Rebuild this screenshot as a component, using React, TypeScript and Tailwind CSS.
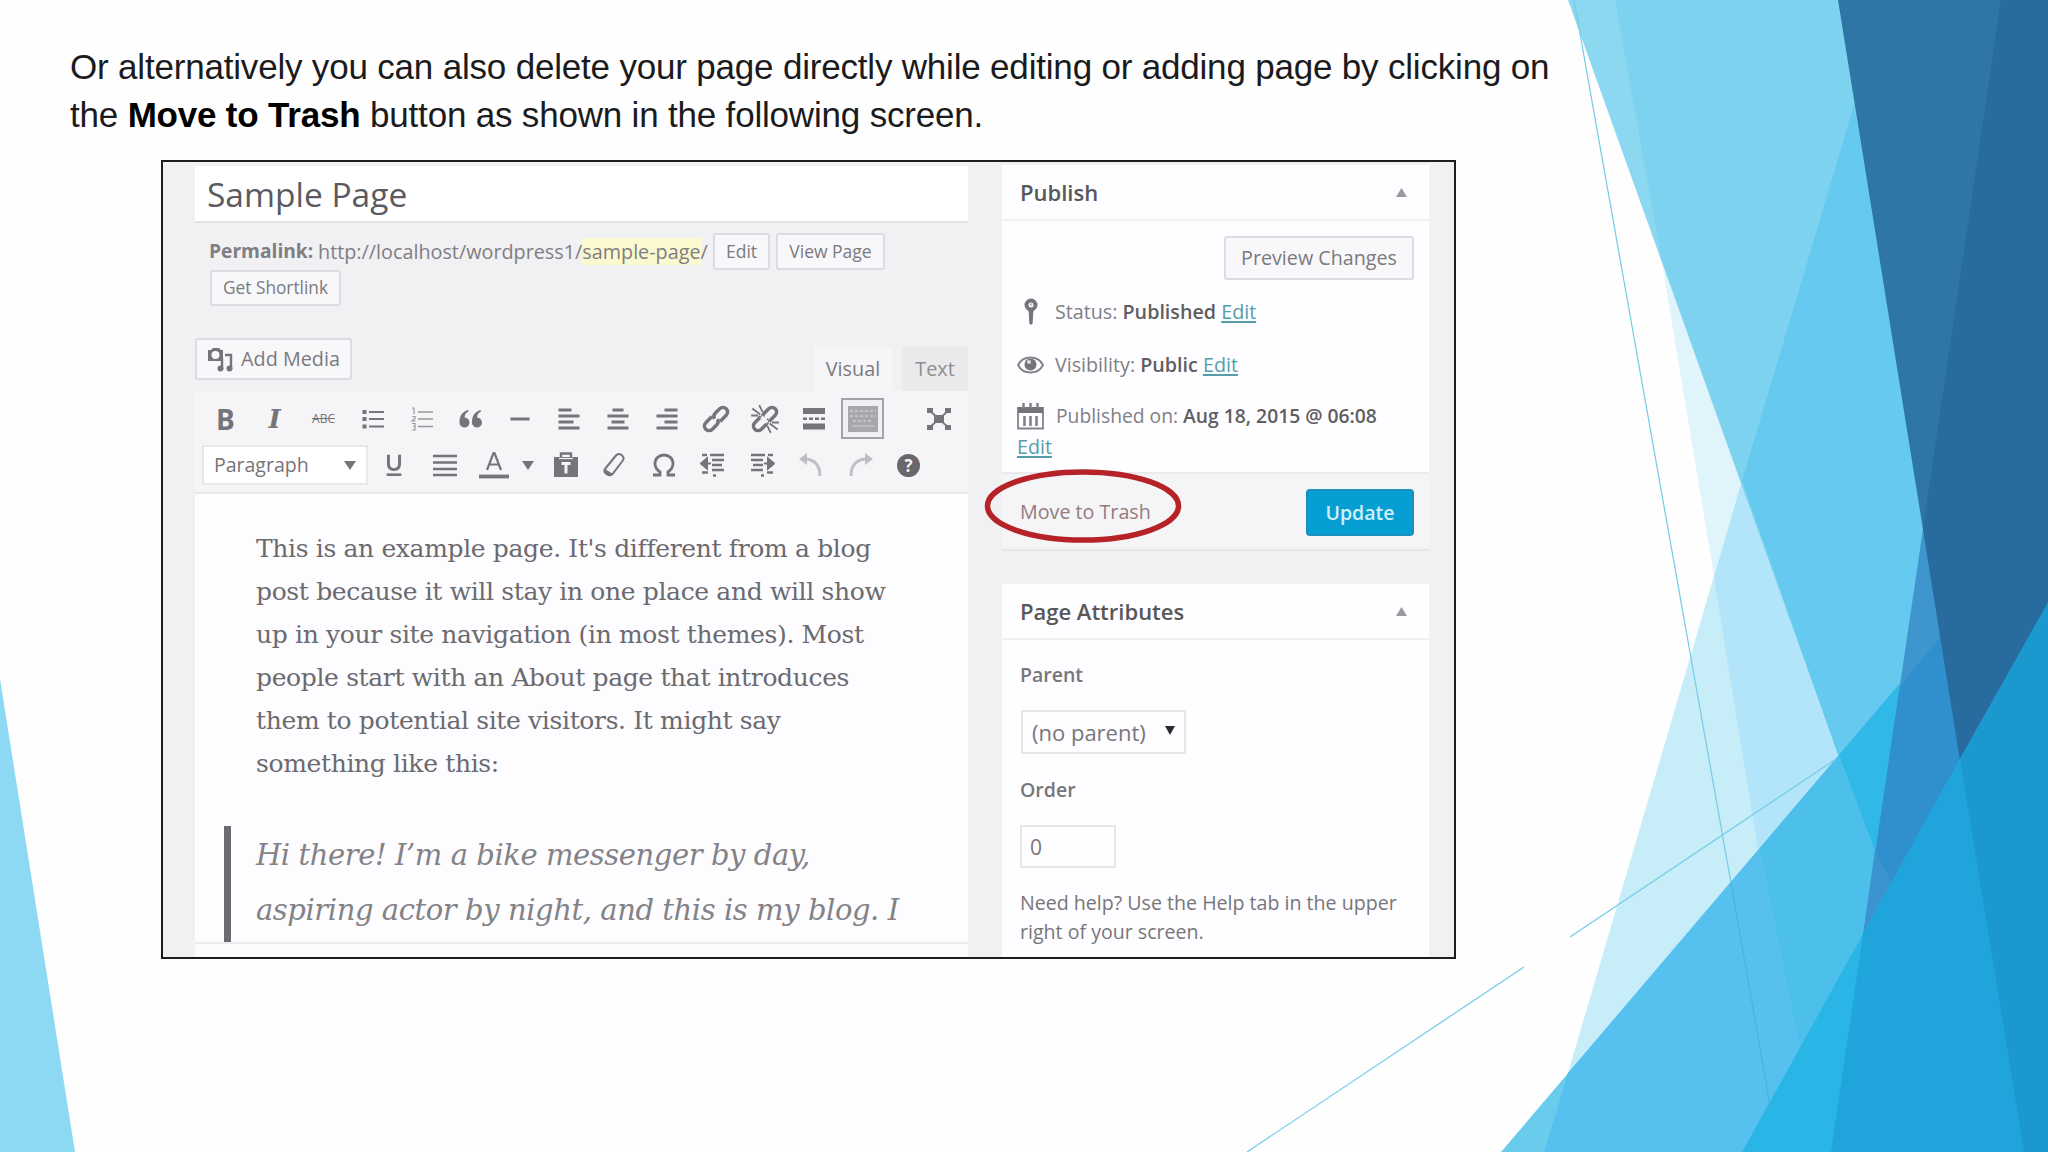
import type { ReactNode } from 'react'

const facets = [
  // light tail on the left edge
  { points: '0,679 75,1152 0,1152', fill: '#8dd9f3' },
  // pale layers
  { points: '1661,257 1839,755 1742,868 1714,576', fill: '#e0f4fc' },
  { points: '1742,481 1839,755 1900,760 1568,1073 1714,576', fill: '#c7edf9' },
  { points: '1742,481 1840,756 1758,850 1714,578', fill: '#b2e5f9' },
  // bright blue band
  { points: '1568,0 1840,0 1925,540 1900,687 1839,757', fill: '#8dd8f1' },
  { points: '1615,0 1840,0 1925,540 1900,687 1839,757 1661,257', fill: '#7dd2f0' },
  { points: '1854,105 1935,580 1935,645 1839,757 1742,481', fill: '#66c9ef' },
  // diagonal wedge from the bottom
  { points: '1501,1152 1839,755 1942,634 2048,600 2048,1152', fill: '#69ccec' },
  { points: '1568,1073 1839,755 1942,634 2048,600 2048,1152 1544,1152', fill: '#56c1ef' },
  { points: '1760,848 1839,755 1942,634 2048,600 2048,1152 1821,1152', fill: '#4cc0ea' },
  { points: '1839,755 1942,634 2048,700 1875,851', fill: '#30b8e7' },
  // dark blue panels
  { points: '1923,529 1962,762 1863,936', fill: '#3f96cf' },
  { points: '1900,686 1940,637 1970,700 1960,761 1863,936', fill: '#2f90cd' },
  { points: '1875,850 1892,884 1863,936', fill: '#3b94cf' },
  { points: '1838,0 2048,0 2048,610 1960,760', fill: '#2e76a6' },
  { points: '2001,0 2048,0 2048,610 1960,760 1923,529', fill: '#276b9f' },
  // bottom right corner
  { points: '1742,1152 1863,934 1960,759 2048,603 2048,1152', fill: '#2ab5e7' },
  { points: '1863,934 1960,759 2048,603 2048,1152 1831,1152', fill: '#20a4dc' },
  { points: '1960,759 2048,603 2048,1152 2024,1152', fill: '#1b98ce' },
]

function Backdrop() {
  return (
    <svg className="absolute inset-0" width="2048" height="1152" viewBox="0 0 2048 1152">
      {facets.map((f) => (
        <polygon key={f.points} points={f.points} fill={f.fill} />
      ))}
      <g stroke="#74cbe6" strokeWidth="1.2">
        <path d="M1574 0 1731 883" />
        <path d="M1731 883 1770 1105" stroke="#3fb6e4" />
        <path d="M1247 1152 1524 967M1570 937 1836 759" />
      </g>
    </svg>
  )
}

function Icon({ children, size = 26 }: { children: ReactNode; size?: number }) {
  return (
    <svg width={size} height={size} viewBox="0 0 26 26" fill="none" stroke="#757478" strokeWidth="2.4">
      {children}
    </svg>
  )
}

const link = (
  <g transform="rotate(-45 13 13)" strokeWidth="3">
    <path d="M12 9H4.500a4 4 0 0 0 0 8H10a4 4 0 0 0 3.800-3" />
    <path d="M14 17h7.500a4 4 0 0 0 0-8H16a4 4 0 0 0-3.800 3" />
  </g>
)

const rowOne: ReactNode[] = [
  <span className="text-[28px] font-bold">B</span>,
  <span className="font-['DejaVu_Serif'] text-[26px] font-bold italic">I</span>,
  <span className="text-[12px] line-through">ABC</span>,
  <Icon>
    <path d="M9 6h15M9 13h15M9 20.500h15" strokeWidth="1.800" />
    <path d="M2.500 6h4M2.500 13h4M2.500 20.500h4" strokeWidth="4" />
  </Icon>,
  <Icon>
    <path d="M9 6h15M9 13h15M9 20.500h15" strokeWidth="1.600" stroke="#9b9a9e" />
    <path d="M3 2h2v6M3 10.500h3v2l-3 2.500h3.500M3 17.500h3v3H4h2v3.500H3" strokeWidth="1.200" stroke="#9b9a9e" />
  </Icon>,
  <Icon>
    <g fill="#757478" stroke="none">
      <path d="M10 4C4 6 1.500 10 1.500 16a5 5 0 1 0 5-4.500C6.800 8.500 8 6.500 10.500 5.500z" />
      <path d="M22.500 4C16.500 6 14 10 14 16a5 5 0 1 0 5-4.500C19.300 8.500 20.500 6.500 23 5.500z" />
    </g>
  </Icon>,
  <Icon><path d="M3.500 13h19" strokeWidth="3" /></Icon>,
  <Icon><path d="M2.500 4h13M2.500 10h21M2.500 16h15M2.500 22h21" strokeWidth="3" /></Icon>,
  <Icon><path d="M7.500 4h11M2.500 10h21M6.500 16h13M2.500 22h21" strokeWidth="3" /></Icon>,
  <Icon><path d="M10.500 4h13M2.500 10h21M10.500 16h13M2.500 22h21" strokeWidth="3" /></Icon>,
  <Icon size={30}>{link}</Icon>,
  <Icon size={30}>
    {link}
    <path d="M2 4l7 5M8 1l3 6M1 10h6M24 22l-7-5M18 25l-3-6M25 16h-6" strokeWidth="1.600" />
    <path d="M10 11l5 5" stroke="#f4f3f6" strokeWidth="3" />
  </Icon>,
  <Icon>
    <path d="M2 5h22M2 20.500h22" strokeWidth="6" />
    <path d="M2 12.800h22" strokeDasharray="4 2" />
  </Icon>,
  <span className="flex h-[41px] w-[43px] shrink-0 items-center justify-center border-2 border-[#a3a2a6] bg-[#f0eff2]">
    <svg width="30" height="26" viewBox="0 0 30 26" fill="none">
      <path d="M0 0h30v26H0z" fill="#a8a7ab" />
      <path d="M2 5h26M2 10h26M5 15h19" stroke="#cfced2" strokeWidth="1.500" strokeDasharray="3 2" />
      <path d="M4 20h22" stroke="#bdbcc0" strokeWidth="2" />
    </svg>
  </span>,
]

const rowTwo: ReactNode[] = [
  <Icon><path d="M1 4h24M1 10.500h24M1 17h24M1 23h24" strokeWidth="2.600" /></Icon>,
  <svg width="32" height="30" viewBox="0 0 32 30" fill="none" stroke="#757478">
    <path d="M9 20 15.500 3h1L23 20M11.500 14.500h9" strokeWidth="2.200" />
    <path d="M1 26.500h30" strokeWidth="3.800" />
  </svg>,
]

const rowTwoRest: ReactNode[] = [
  <Icon>
    <path d="M1 5h24v20H1z" fill="#757478" stroke="none" />
    <path d="M8 5V1.500h10V5" />
    <path d="M6 6.500h14" stroke="#f4f3f6" strokeWidth="1.200" />
    <path d="M8.500 11.500h9M13 11v10.500" stroke="#f4f3f6" strokeWidth="3" />
  </Icon>,
  <Icon>
    <path d="M3 17 13.500 4c2-2.500 4-2.500 6-1s3 3.500 1 6L10.500 22c-2 2-4 1.500-6 0s-3-3-1.500-5z" strokeWidth="2" />
    <path d="M3 17l8 5-3 2-6-3z" fill="#757478" stroke="none" />
  </Icon>,
  <Icon><path d="M2 23h7v-3C5.500 17.500 4 15 4 11.500 4 6.500 8 3 13 3s9 3.500 9 8.500c0 3.500-1.500 6-5 8.500v3h7" strokeWidth="2.800" /></Icon>,
  <Icon>
    <path d="M2 3h5M10 3h14M12 8h12M12 13h10M12 18h12M2 20.500h6M13 23.500h3" />
    <path d="M1 11.500 7 6.500v10zM6 11.500h5" fill="#757478" strokeWidth="2" />
  </Icon>,
  <Icon>
    <path d="M2 3h14M19 3h5M2 8h12M4 13h10M2 18h12M18 20.500h6M12 23.500h3" />
    <path d="M25 11.500 19 6.500v10zM20 11.500h-5" fill="#757478" strokeWidth="2" />
  </Icon>,
  <Icon>
    <g stroke="#c0bfc3">
      <path d="M4 7c11-1 18 5 18 17" strokeWidth="3" />
      <path d="M1 7 9 1v12z" fill="#c0bfc3" stroke="none" />
    </g>
  </Icon>,
  <Icon>
    <g stroke="#c0bfc3">
      <path d="M22 7C11 6 4 12 4 24" strokeWidth="3" />
      <path d="M26 7 18 1v12z" fill="#c0bfc3" stroke="none" />
    </g>
  </Icon>,
  <span className="flex size-[23px] items-center justify-center rounded-full bg-[#68676b] text-[17px] leading-none font-bold text-[#f4f3f6]">?</span>,
]

function Button({ children, className }: { children: ReactNode; className: string }) {
  return (
    <span
      className={`flex shrink-0 items-center justify-center rounded-[3px] border-2 border-[#dddce0] bg-[#f8f7fa] whitespace-nowrap text-[#7b7a7e] ${className}`}
    >
      {children}
    </span>
  )
}

function Editor() {
  return (
    <div className="flex w-[773px] shrink-0 flex-col">
      <div className="mt-[3px] flex h-[57px] items-center border-b-2 border-[#e2e1e4] bg-white pt-px pl-3 text-[33.500px] text-[#5b5a5f]">
        Sample Page
      </div>

      <div className="mt-[10px] flex h-[37px] items-center pl-3.5 text-[19.800px] whitespace-nowrap text-[#7f7e82]">
        <b className="mr-[5px] w-[104px] text-[19.200px] font-bold">Permalink:</b>
        <span className="w-[395px]">
          http://localhost/wordpress1/<span className="bg-[#fbf9cf]">sample-page</span>/
        </span>
        <Button className="h-[37px] w-[57px] text-[17.500px]">Edit</Button>
        <Button className="ml-1.5 h-[37px] w-[109px] text-[17.500px]">View Page</Button>
      </div>
      <Button className="ml-[15px] h-[36px] w-[131px] text-[17.300px]">Get Shortlink</Button>

      <div className="mt-[32px] flex h-[53px] items-start justify-between">
        <Button className="h-[42px] w-[157px] gap-2 text-[19.800px]">
          <svg width="26" height="26" viewBox="0 0 26 26" fill="none" stroke="#757478">
            <path d="M1 4h3l2-2h6l2 2h2v11H1z" fill="#757478" stroke="none" />
            <circle cx="8.500" cy="9" r="4" fill="#f8f7fa" stroke="none" />
            <path d="M18 9h6v14M15 12v11" strokeWidth="2.400" />
            <circle cx="13.500" cy="22.500" r="3" fill="#757478" stroke="none" />
            <circle cx="22.500" cy="22.500" r="3" fill="#757478" stroke="none" />
          </svg>
          Add Media
        </Button>
        <div className="flex gap-2.5 pt-[9px] text-[19.800px] text-[#7b7a7e]">
          <span className="flex h-[44px] w-[78px] items-center justify-center bg-[#f6f5f8]">Visual</span>
          <span className="flex h-[44px] w-[66px] items-center justify-center bg-[#eae9ec] text-[#8f8e92]">Text</span>
        </div>
      </div>

      <div className="flex h-[103px] flex-col border-b-2 border-[#e9e8eb] bg-[#f5f4f7] pt-[6px] text-[#757478]">
        <div className="flex h-[43px] items-center pl-[6px]">
          {rowOne.map((icon, i) => (
            <span key={i} className="flex w-[49px] items-center justify-center leading-none">{icon}</span>
          ))}
          <span className="ml-[27px] flex w-[49px] justify-center">
            <Icon>
              <path d="M3 4l20 18M23 4 3 22" strokeWidth="1.800" />
              <path d="M8 9h10v8H8z" fill="#757478" stroke="none" />
              <path d="M1 2h6v5H1zM19 2h6v5h-6zM1 19h6v5H1zM19 19h6v5h-6z" fill="#757478" stroke="none" />
            </Icon>
          </span>
        </div>
        <div className="mt-[5px] flex h-[40px] items-center pl-[7px]">
          <span className="flex h-[40px] w-[166px] items-center justify-between border-2 border-[#e8e7ea] bg-white px-2.5 text-[19.500px]">
            Paragraph
            <svg width="12" height="9"><path d="M0 0h12L6 9z" fill="#757478" /></svg>
          </span>
          <span className="flex w-[52px] justify-center">
            <Icon size={24}>
              <path d="M7 2v10c0 4 2 6 6 6s6-2 6-6V2" strokeWidth="3.200" />
              <path d="M5 23.500h16" strokeWidth="2.800" />
            </Icon>
          </span>
          {rowTwo.map((icon, i) => (
            <span key={i} className="flex w-[49px] items-center justify-center">{icon}</span>
          ))}
          <span className="flex w-[19px] justify-center">
            <svg width="12" height="9"><path d="M0 0h12L6 9z" fill="#757478" /></svg>
          </span>
          <span className="w-1" />
          {rowTwoRest.map((icon, i) => (
            <span key={i} className="flex w-[49px] items-center justify-center">{icon}</span>
          ))}
        </div>
      </div>

      <div className="flex h-[450px] flex-col border-b-2 border-[#ecebee] bg-[#fdfcfe] pt-[33px] font-['DejaVu_Serif',serif] whitespace-nowrap">
        <p className="pl-[61px] text-[25px] leading-[43px] tracking-[-0.35px] text-[#6b6a6f]">
          This is an example page. It's different from a blog<br />
          post because it will stay in one place and will show<br />
          up in your site navigation (in most themes). Most<br />
          people start with an About page that introduces<br />
          them to potential site visitors. It might say<br />
          something like this:
        </p>
        <blockquote className="mt-auto ml-[29px] h-[116px] border-l-[7px] border-[#6c6b6f] pt-0.5 pl-[25px] text-[29px] leading-[55px] tracking-[-0.42px] text-[#838286] italic">
          Hi there! I’m a bike messenger by day,<br />
          aspiring actor by night, and this is my blog. I
        </blockquote>
      </div>
      <div className="flex-1 bg-[#fbfafd]" />
    </div>
  )
}

function PanelTitle({ children }: { children: ReactNode }) {
  return (
    <div className="flex h-[56px] shrink-0 items-center justify-between border-b-2 border-[#f1f0f3] pt-px pr-[22px] pl-[18px] text-[22px] font-semibold text-[#58575b]">
      {children}
      <svg width="11" height="9"><path d="M0 9h11L5.500 0z" fill="#9a999d" /></svg>
    </div>
  )
}

function EditLink() {
  return <a className="text-[#569daa] underline decoration-2 underline-offset-2">Edit</a>
}

function Sidebar() {
  return (
    <div className="flex w-[427px] shrink-0 flex-col text-[19.700px] whitespace-nowrap text-[#807f83]">
      <section className="mt-0.5 flex h-[386px] shrink-0 flex-col border-b-2 border-[#e6e5e8] bg-[#fefdff]">
        <PanelTitle>Publish</PanelTitle>
        <div className="flex h-[251px] flex-col pt-[15px]">
          <Button className="mr-[15px] h-[44px] w-[190px] self-end text-[19.700px]">Preview Changes</Button>
          <div className="mt-[5px] flex h-[53px] items-center pl-[15px]">
            <svg className="mr-[11px]" width="27" height="28" viewBox="0 0 27 28" fill="none" stroke="#757478">
              <circle cx="14" cy="7" r="4.500" strokeWidth="4" />
              <path d="M12 12h4l-1 14h-2z" fill="#757478" strokeWidth="1" />
              <circle cx="14" cy="6.500" r="1.500" fill="#c5c4c8" stroke="none" />
            </svg>
            <span>Status: <b className="font-semibold text-[#5f5e62]">Published</b> <EditLink /></span>
          </div>
          <div className="flex h-[53px] items-center pl-[15px]">
            <svg className="mr-[11px]" width="27" height="20" viewBox="0 0 27 20" fill="none" stroke="#848387">
              <path d="M1 10C6 0 21 0 26 10 21 20 6 20 1 10z" strokeWidth="2" />
              <circle cx="13.500" cy="9.500" r="6" fill="#757478" stroke="none" />
              <circle cx="12" cy="7" r="2" fill="#e0dfe3" stroke="none" />
            </svg>
            <span>Visibility: <b className="font-semibold text-[#5f5e62]">Public</b> <EditLink /></span>
          </div>
          <div className="flex h-[51px] items-center pl-[15px] text-[19.300px]">
            <svg className="mr-[12px]" width="27" height="27" viewBox="0 0 27 27" fill="none" stroke="#848387">
              <path d="M1 5h25v20.500H1z" strokeWidth="1.800" />
              <path d="M1 4h25v6H1z" fill="#757478" stroke="none" />
              <path d="M6.500 0v5M13.500 0v5M20.500 0v5" strokeWidth="2.500" />
              <path d="M7.500 13v10M13.500 13v10M19.500 13v10" strokeWidth="2.600" />
            </svg>
            <span>Published on: <b className="font-semibold text-[#5f5e62]">Aug 18, 2015 @ 06:08</b></span>
          </div>
          <div className="flex h-[10px] items-center pl-[15px]"><EditLink /></div>
        </div>
        <div className="relative flex h-[77px] items-center justify-between border-t-2 border-[#ebeaed] bg-[#f5f4f6] pt-px pr-[15px] pl-[18px]">
          <span className="text-[#937b7f]">Move to Trash</span>
          <span className="flex h-[47px] w-[108px] items-center justify-center rounded-[4px] border-2 border-[#1b8fbd] bg-[#079fd3] pt-0.5 text-[19.500px] font-semibold text-[#d0eff9]">Update</span>
          <svg className="absolute top-[-6px] left-[-18px]" width="200" height="78" fill="none">
            <ellipse cx="99" cy="38" rx="95.500" ry="34" stroke="#b52227" strokeWidth="5.500" />
          </svg>
        </div>
      </section>

      <section className="mt-[33px] flex flex-1 flex-col bg-[#fefdff] text-[#77767a]">
        <PanelTitle>Page Attributes</PanelTitle>
        <label className="flex h-[70px] items-center pl-[18px] text-[19.500px] font-semibold">Parent</label>
        <span className="ml-[19px] flex h-[44px] w-[165px] items-center justify-between border-2 border-[#e6e5e8] pt-px pr-[9px] pl-[9px] text-[22px]">
          (no parent)
          <svg className="-mt-1" width="10" height="9"><path d="M0 0h10L5 9z" fill="#2b2a2e" /></svg>
        </span>
        <label className="flex h-[71px] items-center pl-[18px] text-[19.500px] font-semibold">Order</label>
        <span className="ml-[18px] flex h-[43px] w-[96px] items-center border-2 border-[#e6e5e8] pt-0.5 pl-2 text-[21px]">0</span>
        <p className="mt-5 pl-[18px] text-[19.600px] leading-[29px]">
          Need help? Use the Help tab in the upper<br />
          right of your screen.
        </p>
      </section>
    </div>
  )
}

export default function App() {
  return (
    <main className="relative h-[1152px] w-[2048px] overflow-hidden bg-[#fefefe]">
      <Backdrop />
      <div className="relative flex flex-col pt-[43px]">
        <p className="h-[117px] pl-[70px] font-['Liberation_Sans',Arial,sans-serif] text-[35px] leading-[48px] tracking-[-0.19px] whitespace-nowrap text-[#1b1b1d]">
          Or alternatively you can also delete your page directly while editing or adding page by clicking on<br />
          the <b className="text-black">Move to Trash</b> button as shown in the following screen.
        </p>
        <div className="ml-[161px] flex h-[799px] w-[1295px] justify-start overflow-hidden border-[2.500px] border-[#1d1d1f] bg-[#f1f0f3] pt-px pl-[32px] font-['Open_Sans','Noto_Sans',sans-serif]">
          <Editor />
          <div className="w-[34px] shrink-0" />
          <Sidebar />
        </div>
      </div>
    </main>
  )
}
